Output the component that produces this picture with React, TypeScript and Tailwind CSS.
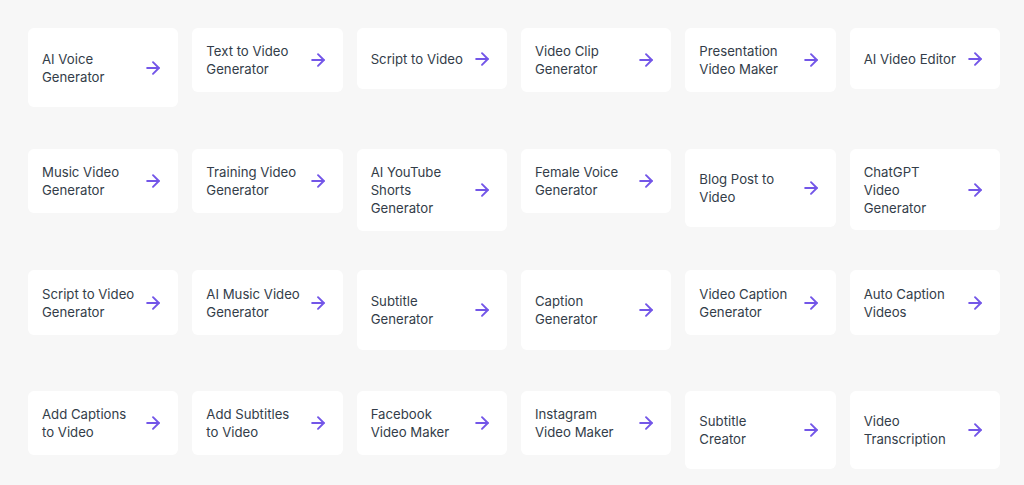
import React from 'react';
import { ArrowRight } from 'lucide-react';

type Tool = { lines: string[]; h: string };

const tools: Tool[] = [
  { lines: ['AI Voice', 'Generator'], h: 'h-[79px]' },
  { lines: ['Text to Video', 'Generator'], h: 'h-[64px]' },
  { lines: ['Script to Video'], h: 'h-[61px]' },
  { lines: ['Video Clip', 'Generator'], h: 'h-[64px]' },
  { lines: ['Presentation', 'Video Maker'], h: 'h-[64px]' },
  { lines: ['AI Video Editor'], h: 'h-[61px]' },

  { lines: ['Music Video', 'Generator'], h: 'h-[64px]' },
  { lines: ['Training Video', 'Generator'], h: 'h-[64px]' },
  { lines: ['AI YouTube', 'Shorts', 'Generator'], h: 'h-[82px]' },
  { lines: ['Female Voice', 'Generator'], h: 'h-[64px]' },
  { lines: ['Blog Post to', 'Video'], h: 'h-[78px]' },
  { lines: ['ChatGPT', 'Video', 'Generator'], h: 'h-[81px]' },

  { lines: ['Script to Video', 'Generator'], h: 'h-[65px]' },
  { lines: ['AI Music Video', 'Generator'], h: 'h-[65px]' },
  { lines: ['Subtitle', 'Generator'], h: 'h-[80px]' },
  { lines: ['Caption', 'Generator'], h: 'h-[80px]' },
  { lines: ['Video Caption', 'Generator'], h: 'h-[65px]' },
  { lines: ['Auto Caption', 'Videos'], h: 'h-[65px]' },

  { lines: ['Add Captions', 'to Video'], h: 'h-[64px]' },
  { lines: ['Add Subtitles', 'to Video'], h: 'h-[64px]' },
  { lines: ['Facebook', 'Video Maker'], h: 'h-[64px]' },
  { lines: ['Instagram', 'Video Maker'], h: 'h-[64px]' },
  { lines: ['Subtitle', 'Creator'], h: 'h-[78px]' },
  { lines: ['Video', 'Transcription'], h: 'h-[78px]' },
];

const App = () => {
  return (
    <div
      className="min-h-[485px] w-full bg-[#f7f7f7] pl-[28px] pr-[24px] pt-[28px]"
      style={{ fontFamily: 'Inter, "Noto Sans", sans-serif' }}
    >
      <div className="grid grid-cols-6 gap-x-[14px] gap-y-[14px] auto-rows-[107px] items-start">
        {tools.map((tool, index) => (
          <a
            key={index}
            href="#"
            className={`${tool.h} flex items-center justify-between rounded-[6px] bg-white pl-[14px] pr-[15px]`}
          >
            <span className="text-[13.2px] leading-[18px] font-normal text-[#333d49] whitespace-nowrap">
              {tool.lines.map((line, i) => (
                <span key={i} className="block">
                  {line}
                </span>
              ))}
            </span>
            <ArrowRight size={20} strokeWidth={2.3} className="shrink-0 text-[#7356e8]" />
          </a>
        ))}
      </div>
    </div>
  );
};

export default App;
